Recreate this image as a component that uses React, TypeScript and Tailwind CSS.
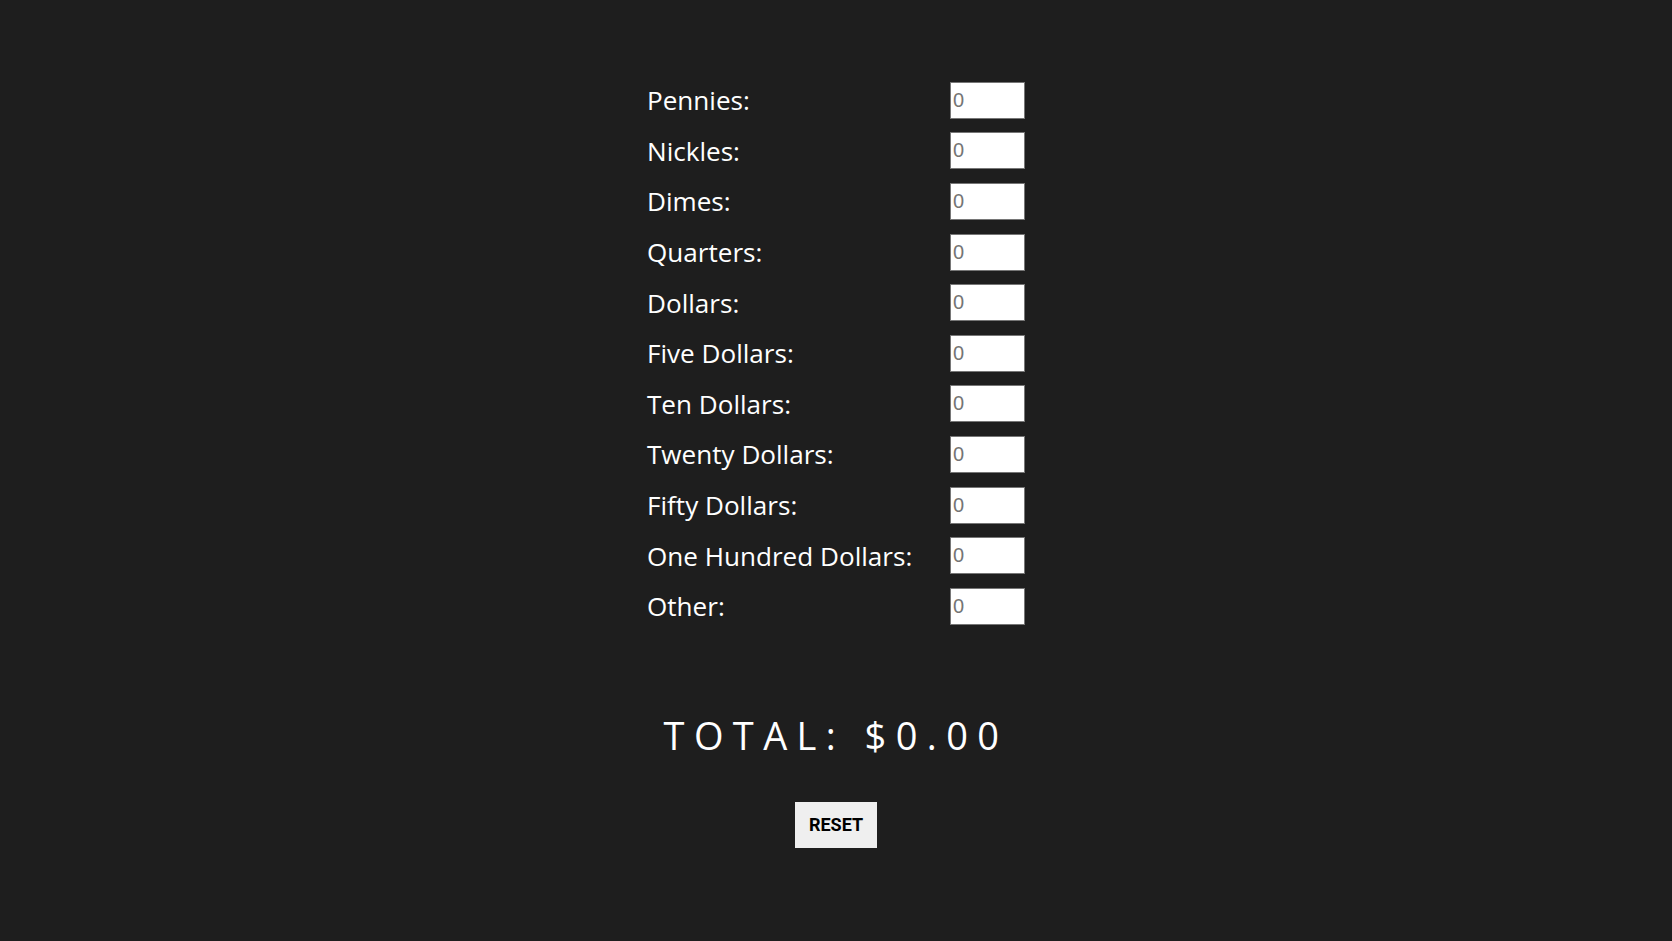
import React, { useState } from "react";

const LABELS = [
  "Pennies:",
  "Nickles:",
  "Dimes:",
  "Quarters:",
  "Dollars:",
  "Five Dollars:",
  "Ten Dollars:",
  "Twenty Dollars:",
  "Fifty Dollars:",
  "One Hundred Dollars:",
  "Other:",
];

export default function App() {
  const [vals, setVals] = useState<string[]>(LABELS.map(() => ""));
  return (
    <div className="min-h-screen bg-[#1e1e1e] flex flex-col items-center pt-[75px] font-['Open_Sans',sans-serif]">
      <div className="flex flex-col w-[378px]">
        {LABELS.map((l, i) => (
          <div key={l} className="flex items-center h-[50.6px]">
            <label className="w-[303px] text-[26.1px] leading-none text-white whitespace-nowrap">
              {l}
            </label>
            <input
              type="text"
              placeholder="0"
              value={vals[i]}
              onChange={(e) => {
                const v = [...vals];
                v[i] = e.target.value;
                setVals(v);
              }}
              className="w-[75px] h-[37px] bg-white border border-[#767676] px-[2px] text-[20px] text-black font-['Liberation_Sans',Arial,sans-serif] placeholder:text-[#757575] outline-none"
            />
          </div>
        ))}
      </div>
      <div className="mt-[75px] text-[38px] leading-[1.5] text-white tracking-[9.4px]">
        TOTAL: $0.00
      </div>
      <button className="mt-[38px] bg-[#efefef] px-[14px] h-[46px] text-[18px] font-bold text-black font-['Roboto',sans-serif]">
        RESET
      </button>
    </div>
  );
}
